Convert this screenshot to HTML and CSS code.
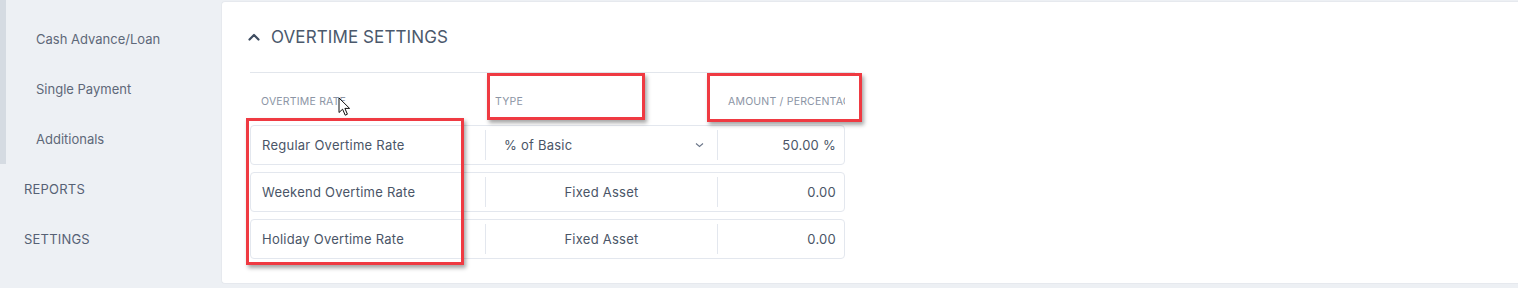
FILE: index.html
```html
<!DOCTYPE html>
<html lang="en">
<head>
    <meta charset="UTF-8">
    <meta name="viewport" content="width=device-width, initial-scale=1.0">
    <title>Overtime Settings</title>
    <link rel="stylesheet" href="styles.css">
</head>
<body>
    <div class="layout">
        <aside class="sidebar">
            <div class="submenu">
                <a class="submenu-item">Cash Advance/Loan</a>
                <a class="submenu-item">Single Payment</a>
                <a class="submenu-item">Additionals</a>
            </div>
            <a class="menu-item">REPORTS</a>
            <a class="menu-item">SETTINGS</a>
        </aside>

        <main class="content">
            <section class="card">
                <h2 class="card-title">
                    <svg class="collapse-icon" width="12" height="8" viewBox="0 0 12 8">
                        <path d="M1.5 6.5 L6 2 L10.5 6.5" fill="none" stroke="#3e4c60" stroke-width="2.2" stroke-linecap="round" stroke-linejoin="round"/>
                    </svg>
                    OVERTIME SETTINGS
                </h2>

                <div class="rates">
                    <div class="rates-head">
                        <div class="head-cell">Overtime Rate</div>
                        <div class="head-cell">Type</div>
                        <div class="head-cell">Amount / Percentage</div>
                    </div>

                    <div class="rate-row">
                        <div class="cell cell-name">Regular Overtime Rate</div>
                        <div class="cell cell-type select">
                            <span>% of Basic</span>
                            <svg width="9" height="6" viewBox="0 0 9 6">
                                <path d="M1 1.5 L4.5 4.5 L8 1.5" fill="none" stroke="#6b7689" stroke-width="1.1"/>
                            </svg>
                        </div>
                        <div class="cell cell-amount">50.00 %</div>
                    </div>
                    <div class="rate-row">
                        <div class="cell cell-name">Weekend Overtime Rate</div>
                        <div class="cell cell-type">Fixed Asset</div>
                        <div class="cell cell-amount">0.00</div>
                    </div>
                    <div class="rate-row">
                        <div class="cell cell-name">Holiday Overtime Rate</div>
                        <div class="cell cell-type">Fixed Asset</div>
                        <div class="cell cell-amount">0.00</div>
                    </div>
                </div>

                <!-- marcações em vermelho sobre a captura -->
                <div class="mark mark-names"></div>
                <div class="mark mark-type"></div>
                <div class="mark mark-amount"></div>

                <svg class="cursor" width="13" height="20" viewBox="0 0 13 20">
                    <path d="M1 1 L1 15.5 L4.6 12.2 L7.2 18.2 L9.4 17.2 L6.9 11.4 L11.6 11.4 Z" fill="#fff" stroke="#111" stroke-width="1" stroke-linejoin="round"/>
                </svg>
            </section>
        </main>
    </div>
</body>
</html>
```

FILE: styles.css
```css
* {
    margin: 0;
    padding: 0;
    box-sizing: border-box;
}

body {
    font-family: 'Inter', 'Open Sans', sans-serif;
    background: #edf0f4;
    color: #4a5567;
    height: 288px;
    overflow: hidden;
}

.layout {
    display: flex;
    height: 288px;
}

.sidebar {
    width: 221px;
    flex-shrink: 0;
}

.submenu {
    border-left: 6px solid #d5dbe2;
    height: 164px;
    padding-top: 14px;
    display: flex;
    flex-direction: column;
}

.submenu-item {
    height: 50px;
    padding-left: 30px;
    font-size: 13px;
    line-height: 50px;
    color: #5e6879;
}

.menu-item {
    display: block;
    height: 50px;
    line-height: 50px;
    padding-left: 24px;
    font-size: 13px;
    color: #566174;
    letter-spacing: 0.2px;
}

.content {
    flex: 1;
    padding-top: 1px;
}

.card {
    position: relative;
    height: 283px;
    background: #fff;
    border: 1px solid #e6e9ee;
    border-right: none;
    border-radius: 4px 0 0 4px;
    padding: 0 0 0 28px;
}

.card-title {
    display: flex;
    align-items: center;
    gap: 11px;
    height: 70px;
    font-size: 17px;
    font-weight: 400;
    color: #4b596c;
    letter-spacing: 0.1px;
}

.collapse-icon {
    margin-left: -2px;
}

.rates {
    width: 605px;
}

.rates-head {
    display: grid;
    grid-template-columns: 234px 233px 128px;
    border-top: 1px solid #e2e6ec;
    height: 53px;
    align-items: center;
    padding-top: 4px;
}

.head-cell {
    padding-left: 11px;
    font-size: 10.5px;
    text-transform: uppercase;
    color: #8c95a5;
    letter-spacing: 0.2px;
    white-space: nowrap;
    overflow: hidden;
}

.rate-row {
    display: grid;
    grid-template-columns: 234px 233px 128px;
    width: 595px;
    height: 40px;
    border: 1px solid #e3e7ee;
    border-radius: 4px;
    margin-bottom: 7px;
    align-items: center;
}

.cell {
    font-size: 13px;
    color: #4a5567;
    height: 30px;
    line-height: 30px;
    white-space: nowrap;
    letter-spacing: 0.25px;
}

.cell-name {
    padding-left: 11px;
}

.cell-type {
    border-left: 1px solid #e3e7ee;
    border-right: 1px solid #e3e7ee;
    text-align: center;
}

.select {
    display: flex;
    justify-content: space-between;
    align-items: center;
    text-align: left;
    padding: 0 13px 0 18px;
}

.cell-amount {
    text-align: right;
    padding-right: 10px;
}

.mark {
    position: absolute;
    border: 3px solid #ef3a42;
    box-shadow: 2px 3px 4px rgba(0, 0, 0, 0.35);
}

.mark-names {
    left: 24px;
    top: 116px;
    width: 218px;
    height: 147px;
}

.mark-type {
    left: 265px;
    top: 71px;
    width: 158px;
    height: 47px;
}

.mark-amount {
    left: 485px;
    top: 71px;
    width: 155px;
    height: 49px;
}

.cursor {
    position: absolute;
    left: 116px;
    top: 95px;
}
```
